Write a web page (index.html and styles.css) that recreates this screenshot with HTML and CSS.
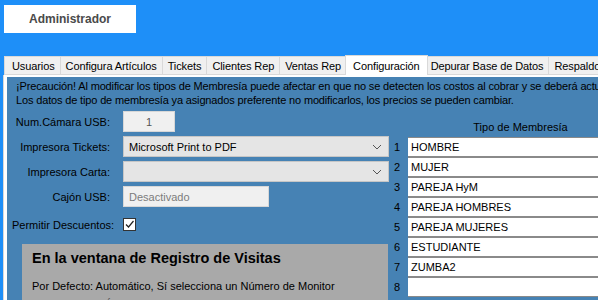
FILE: index.html
```html
<!DOCTYPE html>
<html lang="es">
<head>
  <meta charset="UTF-8">
  <title>Administrador</title>
  <link rel="stylesheet" href="styles.css">
</head>
<body>
  <div class="top-bar">
    <button class="admin-btn">Administrador</button>
  </div>

  <div class="tab-control">
    <div class="tab-strip">
      <div class="tab">Usuarios</div>
      <div class="tab">Configura Artículos</div>
      <div class="tab">Tickets</div>
      <div class="tab">Clientes Rep</div>
      <div class="tab">Ventas Rep</div>
      <div class="tab active">Configuración</div>
      <div class="tab">Depurar Base de Datos</div>
      <div class="tab">Respaldos</div>
    </div>

    <div class="tab-page">
      <p class="warning">¡Precaución! Al modificar los tipos de Membresía puede afectar en que no se detecten los costos al cobrar y se deberá actualizar<br>Los datos de tipo de membresía ya asignados preferente no modificarlos, los precios se pueden cambiar.</p>

      <div class="columns">
        <div class="left-col">
          <div class="form">
            <label class="lbl">Num.Cámara USB:</label>
            <div class="field"><input class="txt num" value="1"></div>

            <label class="lbl">Impresora Tickets:</label>
            <div class="field combo">
              <span>Microsoft Print to PDF</span>
              <svg width="10" height="6" viewBox="0 0 10 6"><path d="M1 1 L5 5 L9 1" fill="none" stroke="#555" stroke-width="1"/></svg>
            </div>

            <label class="lbl">Impresora Carta:</label>
            <div class="field combo">
              <span></span>
              <svg width="10" height="6" viewBox="0 0 10 6"><path d="M1 1 L5 5 L9 1" fill="none" stroke="#555" stroke-width="1"/></svg>
            </div>

            <label class="lbl">Cajón USB:</label>
            <div class="field"><input class="txt drawer" value="Desactivado" disabled></div>
          </div>

          <div class="check-row">
            <span>Permitir Descuentos:</span>
            <span class="checkbox">
              <svg width="11" height="11" viewBox="0 0 11 11"><path d="M2 5.5 L4.5 8 L9.5 2" fill="none" stroke="#222" stroke-width="1.2"/></svg>
            </span>
          </div>

          <div class="info-box">
            <h2>En la ventana de Registro de Visitas</h2>
            <p>Por Defecto: Automático, Sí selecciona un Número de Monitor</p>
            <p>SE MOSTRARÁ LA VENTANA DE REGISTRO EN EL MONITOR SELECCIONADO</p>
          </div>
        </div>

        <div class="right-col">
          <div class="memb-title">Tipo de Membresía</div>
          <div class="memb-list">
            <div class="memb-row"><span class="idx">1</span><span class="memb">HOMBRE</span></div>
            <div class="memb-row"><span class="idx">2</span><span class="memb">MUJER</span></div>
            <div class="memb-row"><span class="idx">3</span><span class="memb">PAREJA HyM</span></div>
            <div class="memb-row"><span class="idx">4</span><span class="memb">PAREJA HOMBRES</span></div>
            <div class="memb-row"><span class="idx">5</span><span class="memb">PAREJA MUJERES</span></div>
            <div class="memb-row"><span class="idx">6</span><span class="memb">ESTUDIANTE</span></div>
            <div class="memb-row"><span class="idx">7</span><span class="memb">ZUMBA2</span></div>
            <div class="memb-row"><span class="idx">8</span><span class="memb"></span></div>
          </div>
        </div>
      </div>
    </div>
  </div>
</body>
</html>
```

FILE: styles.css
```css
* {
  margin: 0;
  padding: 0;
  box-sizing: border-box;
}

body {
  font-family: 'Liberation Sans', Arial, sans-serif;
  font-size: 11px;
  background: #1e8ff8;
  color: #000;
  height: 300px;
  overflow: hidden;
}

.top-bar {
  padding: 5px 0 0 4px;
  height: 55px;
}

.admin-btn {
  width: 132px;
  height: 28px;
  background: #fff;
  border: none;
  font-family: inherit;
  font-size: 12px;
  font-weight: bold;
  color: #4a4a4a;
}

.tab-control {
  margin-left: 4px;
}

.tab-strip {
  display: flex;
  align-items: flex-end;
  height: 20px;
  white-space: nowrap;
  overflow: hidden;
}

.tab {
  height: 19px;
  line-height: 18px;
  padding: 0 5px;
  background: #f0f0f0;
  border: 1px solid #d9d9d9;
  border-left: none;
  font-size: 11px;
  letter-spacing: -0.1px;
  flex-shrink: 0;
}

.tab:first-child {
  border-left: 1px solid #d9d9d9;
  padding: 0 5px 0 7px;
}

.tab.active {
  height: 22px;
  line-height: 20px;
  background: #fff;
  border: 1px solid #d9d9d9;
  border-bottom: none;
  margin: 0 -2px -2px;
  padding: 0 7px;
  position: relative;
  z-index: 1;
}

.tab-page {
  border-left: 3px solid #fff;
  border-top: 2px solid #fff;
  background: #4682b4;
  box-shadow: -1px 0 0 #d9d9d9;
  height: 230px;
  padding: 2px 0 0 9px;
}

.warning {
  font-size: 11px;
  line-height: 14px;
  letter-spacing: -0.15px;
  white-space: nowrap;
  overflow: hidden;
}

.columns {
  display: flex;
  margin-top: 4px;
}

.left-col {
  width: 373px;
  flex-shrink: 0;
}

.form {
  display: grid;
  grid-template-columns: 94px 1fr;
  column-gap: 13px;
  row-gap: 4px;
}

.lbl {
  justify-self: end;
  align-self: center;
  white-space: nowrap;
  font-size: 11px;
}

.field {
  height: 21px;
}

.txt {
  height: 21px;
  border: 1px solid #d7d7d7;
  background: #f0f0f0;
  font-family: inherit;
  font-size: 11px;
  color: #000;
  padding: 0 5px;
}

.txt.num {
  width: 52px;
  text-align: center;
  color: #555;
}

.txt.drawer {
  width: 146px;
  color: #7c7c7c;
}

.combo {
  width: 266px;
  background: #e5e5e5;
  border: 1px solid #c6c6c6;
  display: flex;
  align-items: center;
  justify-content: space-between;
  padding: 0 6px 0 5px;
  font-size: 11px;
}

.check-row {
  display: flex;
  align-items: center;
  gap: 9px;
  margin: 11px 0 0 -4px;
  font-size: 11px;
}

.checkbox {
  width: 13px;
  height: 13px;
  background: #fff;
  border: 1px solid #333;
  display: flex;
  align-items: center;
  justify-content: center;
}

.info-box {
  margin: 13px 0 0 6px;
  width: 366px;
  height: 80px;
  background: #a9a9a9;
  padding: 6px 10px;
  overflow: hidden;
}

.info-box h2 {
  font-size: 14.5px;
  line-height: 16px;
  font-weight: bold;
  margin-bottom: 13px;
}

.info-box p {
  font-size: 11px;
  line-height: 15px;
  white-space: nowrap;
}

.info-box p + p {
  margin-top: 3px;
}

.right-col {
  flex: 1;
  padding-left: 4px;
}

.memb-title {
  text-align: center;
  font-size: 11px;
  margin: 10px 0 0 50px;
  height: 16px;
}

.memb-list {
  display: flex;
  flex-direction: column;
}

.memb-row {
  display: flex;
  align-items: center;
  height: 20px;
}

.idx {
  width: 15px;
  text-align: right;
  padding-right: 8px;
  font-size: 11px;
}

.memb {
  flex: 1;
  height: 20px;
  background: #fff;
  border-top: 1px solid #8a8a8a;
  border-bottom: 1px solid #8a8a8a;
  font-size: 11px;
  line-height: 18px;
  padding-left: 3px;
  margin-right: -30px;
}
```
